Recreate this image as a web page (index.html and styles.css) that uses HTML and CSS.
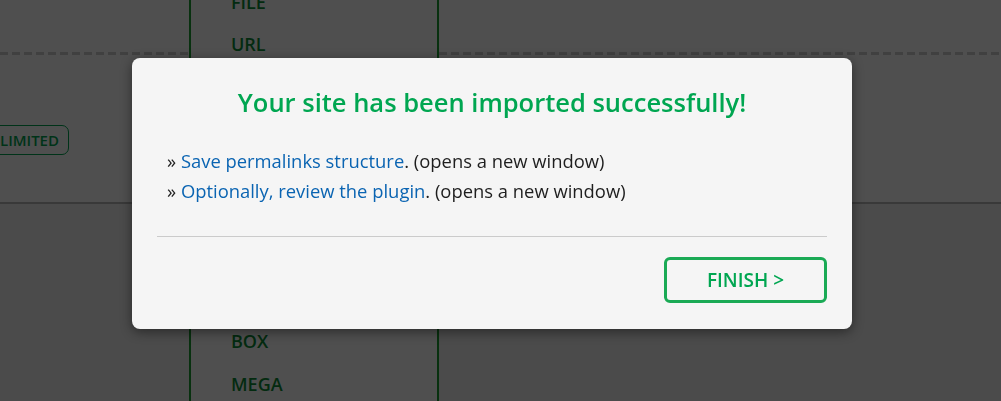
FILE: index.html
```html
<!DOCTYPE html>
<html lang="en">
<head>
<meta charset="utf-8">
<title>Import complete</title>
<link rel="stylesheet" href="styles.css">
</head>
<body>
<div class="page">
  <div class="side side-left">
    <div class="band-top"></div>
    <div class="band-mid">
      <span class="badge">LIMITED</span>
    </div>
    <div class="band-low"></div>
  </div>
  <div class="sources">
    <div class="src">FILE</div>
    <div class="src">URL</div>
    <div class="src-covered"></div>
    <div class="src">BOX</div>
    <div class="src">MEGA</div>
  </div>
  <div class="side side-right">
    <div class="band-top"></div>
    <div class="band-mid"></div>
    <div class="band-low"></div>
  </div>
</div>

<div class="overlay"></div>

<div class="modal">
  <h2 class="modal-title">Your site has been imported successfully!</h2>
  <ul class="modal-list">
    <li>&raquo; <a href="#">Save permalinks structure</a>. (opens a new window)</li>
    <li>&raquo; <a href="#">Optionally, review the plugin</a>. (opens a new window)</li>
  </ul>
  <hr class="modal-divider">
  <div class="modal-actions">
    <button class="btn-finish" type="button">FINISH &gt;</button>
  </div>
</div>
</body>
</html>
```
FILE: styles.css
```css
* { box-sizing: border-box; }

html, body {
  margin: 0;
  padding: 0;
  height: 100%;
  overflow: hidden;
}

body {
  font-family: "Open Sans", "Noto Sans", sans-serif;
  background: #f0f0f0;
}

.page {
  display: grid;
  grid-template-columns: 189px 250px 1fr;
  height: 401px;
}

.side {
  display: flex;
  flex-direction: column;
}

.band-top {
  height: 55px;
  background: #ffffff;
  position: relative;
  flex: none;
}
.band-top::after {
  content: "";
  position: absolute;
  left: 0;
  right: 0;
  bottom: 0;
  height: 3px;
  background: repeating-linear-gradient(to right, #cdcdcd 0 8px, #ffffff 8px 12px);
}

.band-mid {
  height: 149px;
  background: #ffffff;
  border-bottom: 2px solid #b9b9b9;
  display: flex;
  align-items: center;
  flex: none;
  padding-top: 22px;
}

.band-low {
  flex: 1;
  background: #f0f0f0;
}

.badge {
  margin-left: -13px;
  padding: 5px 9px 5px 12px;
  border: 1px solid #00a651;
  border-radius: 7px;
  color: #00a651;
  font-weight: 600;
  font-size: 15px;
  line-height: 18px;
}

.sources {
  background: #ffffff;
  border-left: 2px solid #1b9f33;
  border-right: 2px solid #1b9f33;
  padding-left: 40px;
  margin-top: -19px;
}

.src {
  height: 42.4px;
  line-height: 42.4px;
  font-size: 18px;
  font-weight: 600;
  color: #0c8a36;
}

.src-covered {
  height: 254.4px;
}

.overlay {
  position: fixed;
  inset: 0;
  background: rgba(0, 0, 0, 0.69);
}

.modal {
  position: absolute;
  left: 132px;
  top: 58px;
  width: 720px;
  height: 271px;
  background: #f5f5f5;
  border-radius: 8px;
  box-shadow: 0 3px 12px rgba(0, 0, 0, 0.45);
  padding: 24px 25px 0;
}

.modal-title {
  margin: 0;
  text-align: center;
  font-size: 25.5px;
  line-height: 40px;
  font-weight: 600;
  color: #00a651;
}

.modal-list {
  list-style: none;
  margin: 24px 0 0;
  padding: 0 0 0 10px;
  font-size: 18.4px;
  line-height: 30px;
  color: #1e1e1e;
}

.modal-list a {
  color: #0a64b2;
  text-decoration: none;
}

.modal-divider {
  margin: 30px 0 0;
  border: 0;
  border-top: 1px solid #cbcbcb;
}

.modal-actions {
  display: flex;
  justify-content: flex-end;
  padding-top: 20px;
}

.btn-finish {
  width: 163px;
  height: 46px;
  background: transparent;
  border: 3px solid #1aaa55;
  border-radius: 6px;
  color: #00a651;
  font-family: inherit;
  font-size: 19px;
  font-weight: 600;
  padding: 0;
  cursor: pointer;
}
```
